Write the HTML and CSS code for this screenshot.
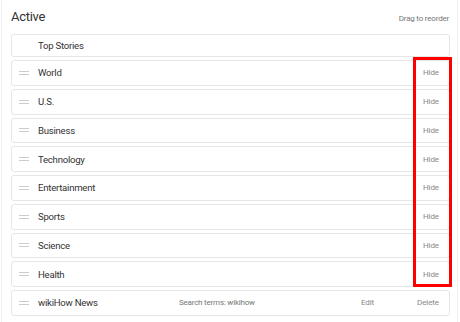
FILE: index.html
```html
<!DOCTYPE html>
<html lang="en">
<head>
    <meta charset="UTF-8">
    <title>Sections</title>
    <link rel="stylesheet" href="styles.css">
</head>
<body>
    <div class="panel">
        <div class="panel-head">
            <h2>Active</h2>
            <span class="hint">Drag to reorder</span>
        </div>

        <div class="list">
            <div class="row fixed">
                <span class="label">Top Stories</span>
            </div>
            <div class="row"><span class="handle"></span><span class="label">World</span><span class="action">Hide</span></div>
            <div class="row"><span class="handle"></span><span class="label">U.S.</span><span class="action">Hide</span></div>
            <div class="row"><span class="handle"></span><span class="label">Business</span><span class="action">Hide</span></div>
            <div class="row"><span class="handle"></span><span class="label">Technology</span><span class="action">Hide</span></div>
            <div class="row"><span class="handle"></span><span class="label">Entertainment</span><span class="action">Hide</span></div>
            <div class="row"><span class="handle"></span><span class="label">Sports</span><span class="action">Hide</span></div>
            <div class="row"><span class="handle"></span><span class="label">Science</span><span class="action">Hide</span></div>
            <div class="row"><span class="handle"></span><span class="label">Health</span><span class="action">Hide</span></div>
            <div class="row">
                <span class="handle"></span>
                <span class="label">wikiHow News</span>
                <span class="terms">Search terms: wikihow</span>
                <span class="action edit">Edit</span>
                <span class="action">Delete</span>
            </div>
            <div class="highlight"></div>
        </div>
    </div>
</body>
</html>
```

FILE: styles.css
```css
/* General Styles */
body {
    margin: 0;
    font-family: Roboto, Arial, sans-serif;
    background-color: white;
    color: #333;
}

.panel {
    margin: -10px 2px 0 1px;
    padding: 10px 7px 20px 9px;
    border-left: 1px solid #eee;
    border-right: 1px solid #eee;
    height: 340px;
    box-sizing: border-box;
}

.panel-head {
    display: flex;
    justify-content: space-between;
    align-items: baseline;
    padding: 9px 0 0 0;
    height: 25px;
}

.panel-head h2 {
    margin: 0;
    font-size: 13px;
    letter-spacing: -0.3px;
    font-weight: normal;
    color: #333;
}

.hint {
    font-size: 8px;
    letter-spacing: -0.2px;
    color: #777;
    padding-right: 1px;
}

.list {
    position: relative;
    display: flex;
    flex-direction: column;
    gap: 3px;
}

.row {
    display: flex;
    align-items: center;
    height: 25.75px;
    box-sizing: border-box;
    border: 1px solid #e6e6e6;
    border-radius: 3px;
    padding: 0 9px 0 7px;
    font-size: 9.6px;
    letter-spacing: -0.25px;
}

.row.fixed {
    height: 23px;
    padding-left: 26px;
}

.handle {
    width: 10px;
    height: 4px;
    border-top: 1px solid #ccc;
    border-bottom: 1px solid #ccc;
    margin-right: 9px;
    box-sizing: border-box;
}

.label {
    flex: 1;
}

.terms {
    font-size: 8px;
    letter-spacing: -0.2px;
    color: #777;
    margin-right: 106px;
}

.action {
    font-size: 8px;
    letter-spacing: -0.1px;
    color: #888;
    padding-right: 1px;
}

.edit {
    margin-right: 42px;
}

/* Annotation box around the Hide buttons */
.highlight {
    position: absolute;
    left: 402px;
    top: 23px;
    width: 39px;
    height: 230px;
    border: 3px solid #f00;
    box-sizing: border-box;
}
```
